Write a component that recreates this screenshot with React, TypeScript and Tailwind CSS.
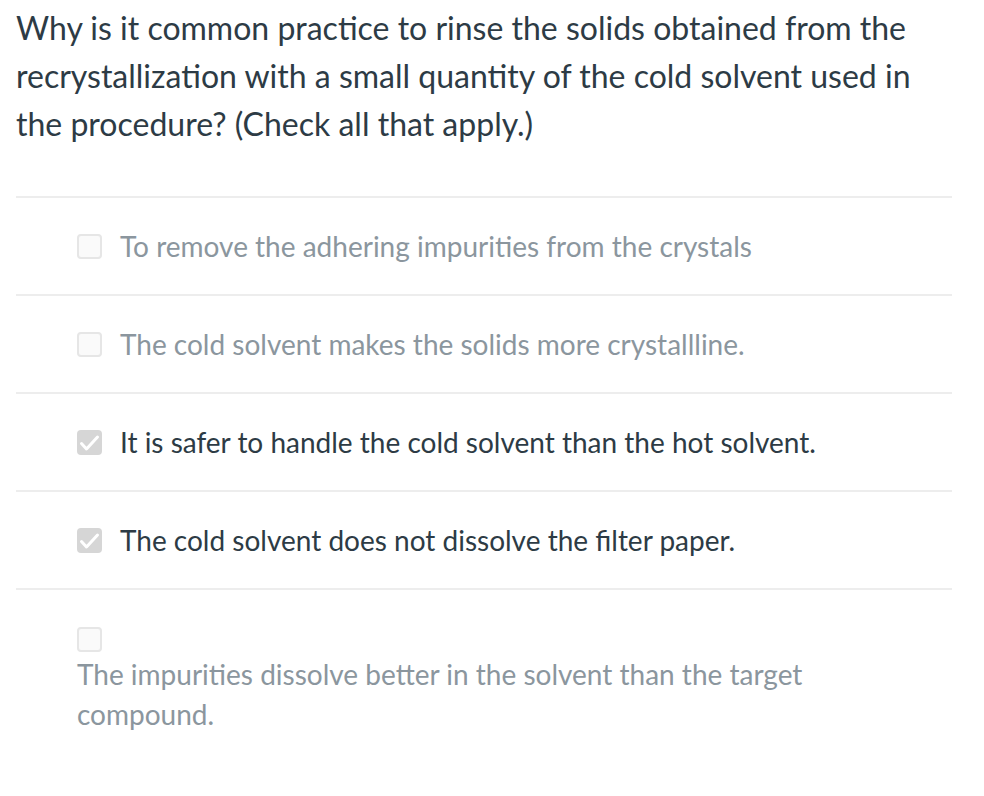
import React from "react";

const Check = ({ checked }: { checked: boolean }) =>
  checked ? (
    <div className="w-[25px] h-[25px] shrink-0 rounded-[4px] bg-[#d6d6d6]">
      <svg width="25" height="25" viewBox="0 0 25 25" fill="none">
        <path d="M4.5 13.5 L9.5 19 L20.5 7" stroke="#ffffff" strokeWidth="3" strokeLinecap="round" strokeLinejoin="round" />
      </svg>
    </div>
  ) : (
    <div className="w-[25px] h-[25px] shrink-0 rounded-[4px] bg-[#fafafa] border-2 border-[#e6e6e6]" />
  );

const options = [
  { text: "To remove the adhering impurities from the crystals", checked: false },
  { text: "The cold solvent makes the solids more crystallline.", checked: false },
  { text: "It is safer to handle the cold solvent than the hot solvent.", checked: true },
  { text: "The cold solvent does not dissolve the filter paper.", checked: true },
];

export default function App() {
  return (
    <div className="w-[984px] h-[796px] bg-white overflow-hidden px-4 font-['Lato','Liberation_Sans',sans-serif]">
      <div className="w-[936px]">
        <p className="pt-[4px] text-[32px] leading-[48px] text-[#2d3b45]">
          Why is it common practice to rinse the solids obtained from the recrystallization with a small quantity of the cold solvent used in the procedure? (Check all that apply.)
        </p>
        <div className="mt-[48px]">
          {options.map((o) => (
            <div key={o.text} className="border-t-2 border-[#ededed] h-[98px] flex items-center pl-[61px] gap-[18px]">
              <Check checked={o.checked} />
              <span className={"text-[28px] leading-[32px] " + (o.checked ? "text-[#2d3b45]" : "text-[#8b969e]")}>
                {o.text}
              </span>
            </div>
          ))}
          <div className="border-t-2 border-[#ededed] pt-[37px] pl-[61px]">
            <Check checked={false} />
            <p className="mt-[2px] text-[28px] leading-[40px] text-[#8b969e]">
              The impurities dissolve better in the solvent than the target
              <br />
              compound.
            </p>
          </div>
        </div>
      </div>
    </div>
  );
}
